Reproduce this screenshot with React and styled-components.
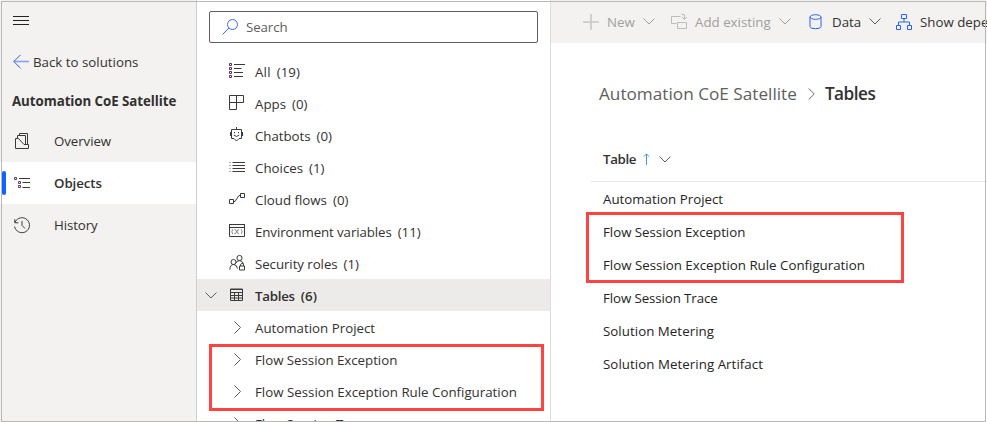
import React from "react";
import styled, { createGlobalStyle } from "styled-components";

const GlobalStyle = createGlobalStyle`
  * { box-sizing: border-box; }
  html, body { margin: 0; padding: 0; }
  body {
    font-family: "Open Sans", "Noto Sans", sans-serif;
    font-size: 13.3px;
    color: #323130;
    background: #fff;
    overflow: hidden;
  }
`;

const Window = styled.div`
  position: relative;
  display: flex;
  width: 987px;
  height: 422px;
  overflow: hidden;
  background: #fff;
`;

const Frame = styled.div`
  position: absolute;
  inset: 1px 1px 0 1px;
  border: 1px solid #b9b8b7;
  pointer-events: none;
`;

const Highlight = styled.div`
  position: absolute;
  left: ${(p) => p.$x}px;
  top: ${(p) => p.$y}px;
  width: ${(p) => p.$w}px;
  height: ${(p) => p.$h}px;
  border: 3px solid #ff4343;
  pointer-events: none;
`;

const Label = styled.span`
  white-space: pre;
  line-height: 20px;
  letter-spacing: ${(p) => p.$track || 0}px;
  font-weight: ${(p) => (p.$strong ? 600 : 400)};
`;

const Icon = styled.svg`
  display: block;
  flex: none;
  width: ${(p) => p.$w || 16}px;
  height: ${(p) => p.$h || 16}px;
  fill: none;
  stroke: ${(p) => p.$color || "#3b3a39"};
  stroke-width: 1;
  overflow: visible;
`;

/* ---------- side navigation ---------- */

const SideNav = styled.nav`
  flex: none;
  width: 197px;
  background: #f3f2f1;
  border-right: 1px solid #d0cfce;
`;

const MenuButton = styled.div`
  height: 40px;
  padding: 12px 0 0 13px;
`;

const BackLink = styled.div`
  display: flex;
  align-items: center;
  gap: 4px;
  height: 44px;
  padding-left: 13px;
`;

const SolutionName = styled.div`
  display: flex;
  align-items: center;
  height: 36px;
  padding: 0 0 2px 12px;
`;

const SolutionLabel = styled(Label)`
  font-weight: 700;
`;

const NavItem = styled.div`
  display: flex;
  align-items: center;
  gap: 10px;
  height: 42px;
  padding-left: 2px;
  background: ${(p) => (p.$active ? "#fff" : "transparent")};
`;

const NavMarker = styled.span`
  width: 4px;
  height: 24px;
  margin-right: -2px;
  border-radius: 2px;
  background: ${(p) => (p.$active ? "#0d64ff" : "transparent")};
`;

const NavText = styled(Label)`
  margin-left: 14px;
`;

/* ---------- object tree ---------- */

const Tree = styled.section`
  flex: none;
  width: 354px;
  overflow: hidden;
  border-right: 1px solid #dddcdb;
`;

const SearchBox = styled.div`
  display: flex;
  align-items: center;
  gap: 8px;
  width: 329px;
  height: 32px;
  margin: 11px 0 12px 12px;
  padding-left: 12px;
  border: 1px solid #605e5c;
  border-radius: 2px;
  color: #605e5c;
`;

const TreeRow = styled.div`
  display: grid;
  grid-template-columns: 32px 16px 1fr;
  align-items: center;
  height: 32px;
  background: ${(p) => (p.$active ? "#edebe9" : "transparent")};
`;

const ChevronSlot = styled.span`
  padding-left: ${(p) => (p.$nested ? 5 : 8)}px;
`;

const TreeText = styled.span`
  display: flex;
  gap: 6px;
  margin-left: 10px;
  padding-top: 2px;
`;

/* ---------- content ---------- */

const Content = styled.main`
  flex: 1;
  min-width: 0;
  overflow: hidden;
`;

const CommandBar = styled.div`
  display: flex;
  height: 43px;
  padding-left: 32px;
  background: #f3f2f1;
`;

const Command = styled.div`
  display: flex;
  flex: none;
  align-items: center;
  width: ${(p) => p.$w}px;
  color: ${(p) => (p.$disabled ? "#a19f9d" : "#323130")};
`;

const CommandText = styled(Label)`
  margin: 0 8px;
`;

const Breadcrumb = styled.div`
  display: flex;
  align-items: center;
  height: 101px;
  padding-left: 48px;
  font-size: 17.2px;
  color: #605e5c;
`;

const Current = styled(Label)`
  color: #323130;
`;

const CrumbSeparator = styled.span`
  margin: 0 10px 0 11px;
`;

const TableHeader = styled.div`
  display: flex;
  align-items: center;
  height: 38px;
  margin-left: 40px;
  padding: 0 0 7px 12px;
  border-bottom: 1px solid #e8e7e6;
`;

const SortMark = styled.span`
  margin: 0 9px 0 7px;
`;

const TableRow = styled.div`
  display: flex;
  align-items: center;
  height: 33px;
  padding: 1px 0 0 52px;
  color: #242424;
`;

/* ---------- icons ---------- */

const ChevronDown = ({ color }) => (
  <Icon $w={12} $h={7} $color={color || "#605e5c"} viewBox="0 0 12 7">
    <path d="M.5.5 6 6 11.5.5" />
  </Icon>
);

const ChevronRight = ({ w = 7, h = 13 }) => (
  <Icon $w={w} $h={h} $color="#605e5c" viewBox="0 0 7 13">
    <path d="M.5.5 6.5 6.5.5 12.5" />
  </Icon>
);

const icons = {
  menu: <path d="M0 4.5h16M0 8.5h16M0 12.5h16" stroke="#222" />,
  back: (
    <>
      <path d="M.8 7.5h15.2" stroke="#8a9ff0" strokeWidth="1.6" />
      <path d="M7.5.8.8 7.5l6.7 6.7" />
    </>
  ),
  overview: (
    <>
      <path d="M1.5 5.5h3l5.5 6h4.5v4h-13z" />
      <path d="M3.5 5.5v-3h8v9M5.5 2.5v-2h8v11" />
    </>
  ),
  objects: (
    <>
      <path d="M.5 2.5h2v2h-2zM4.5 6.5h2v2h-2zM4.5 10.5h2v2h-2z" stroke="#6b3a6b" />
      <path d="M5 3.5h11M8.5 7.5H16M8.5 12.5H16" />
    </>
  ),
  history: <path d="M1.2 5A7.5 7.5 0 1 1 .6 9.5M.8 2.2v3.6h3.6M8 4v4.5l3 3" />,
  all: (
    <>
      <path d="M.5.5h2v2h-2zM.5 4.5h2v2h-2zM.5 8.5h2v2h-2zM.5 12.5h2v2h-2z" stroke="#57305c" />
      <path d="M5 1.5h11M5 5.5h7.5M5 9.5h9M5 13.5h9" />
    </>
  ),
  apps: <path d="M.5.5h7v14h-7zM.5.5h14v7H.5" />,
  chatbots: (
    <>
      <path d="M7.5 0v2.5M2.5 2.5h10v9H10L7.5 14 5 11.5H2.5zM1.5 5v4M13.5 5v4" />
      <path d="M4.8 8q2.7 3 5.4 0M5.5 5v1.2M9.5 5v1.2" />
    </>
  ),
  choices: (
    <>
      <path d="M3.5 3.5H16M3.5 6.5H16M3.5 9.5H16M3.5 12.5H16" />
      <path d="M.5 3.5h1M.5 6.5h1M.5 9.5h1M.5 12.5h1" stroke="#76507b" />
    </>
  ),
  flows: <path d="M.5 8.5h4v4h-4zM11.5 2.5h4v4h-4zM4.5 10.5H6l4-6h1.5" />,
  variables: (
    <>
      <path d="M.5 1.5h15v12H.5z" />
      <path d="M0 1.5h16M.5 4.5h15" />
      <path
        d="M3.7 6.3q-1.8 2.4 0 4.8M12.3 6.3q1.8 2.4 0 4.8M5.5 6.7h1l2.7 4h1M10 6.7H9l-2.7 4h-1"
        strokeWidth=".8"
        stroke="#66646b"
      />
    </>
  ),
  roles: (
    <>
      <circle cx="4.5" cy="7" r="2.5" />
      <circle cx="10.5" cy="3" r="2.6" />
      <path d="M.8 14.5q.4-5 3.7-5t4 4M7 8Q7.7 5.6 10.5 5.6T14.5 9" />
      <path d="M10.5 11h5v4h-5zM11.5 11V9.5q1.5-2.4 3 0V11" />
    </>
  ),
  tables: <path d="M1.5 2h12v11.5h-12zM1 2.5h13M1.5 5.5h12M1.5 8.5h12M1.5 11h12M5.5 5v8.5M9.5 5v8.5" />,
  search: (
    <>
      <circle cx="10.5" cy="5.5" r="5" />
      <path d="M7 9 .5 15.5" />
    </>
  ),
  plus: <path d="M0 8h16M8 0v16" stroke="#c8c6c4" strokeWidth="1.5" />,
  existing: <path d="M5.5 9.5h-5v-7h9M6.5 8.5h9v6h-9zM10.5 .5h3v4.5M11 3l2.5 2.5L16 3" />,
  data: (
    <>
      <ellipse cx="7.5" cy="3" rx="5.5" ry="2.3" />
      <path d="M2 3v9.7q0 2 5.5 2t5.5-2V3" />
    </>
  ),
  dependencies: (
    <path d="M5.5.5h5v4h-5zM.5 11.5h4v4h-4zM11.5 11.5h4v4h-4zM8 4.5v3.5M2.5 11.5V8h11v3.5" />
  ),
};

const Glyph = ({ name, ...rest }) => (
  <Icon viewBox="0 0 16 16" {...rest}>
    {icons[name]}
  </Icon>
);

/* ---------- data ---------- */

const navItems = [
  { icon: "overview", text: "Overview", track: -0.07 },
  { icon: "objects", text: "Objects", track: -0.08, active: true },
  { icon: "history", text: "History", track: -0.1 },
];

const treeItems = [
  { icon: "all", text: "All", count: 19, track: 0.2 },
  { icon: "apps", text: "Apps", count: 0, track: 0 },
  { icon: "chatbots", text: "Chatbots", count: 0, track: -0.05 },
  { icon: "choices", text: "Choices", count: 1, track: 0 },
  { icon: "flows", text: "Cloud flows", count: 0, track: 0 },
  { icon: "variables", text: "Environment variables", count: 11, track: -0.1 },
  { icon: "roles", text: "Security roles", count: 1, track: -0.07 },
  { icon: "tables", text: "Tables", count: 6, track: -0.25, active: true },
];

const tables = [
  { text: "Automation Project", track: 0 },
  { text: "Flow Session Exception", track: -0.03 },
  { text: "Flow Session Exception Rule Configuration", track: 0 },
  { text: "Flow Session Trace", track: -0.1 },
  { text: "Solution Metering", track: 0.04 },
  { text: "Solution Metering Artifact", track: 0.05 },
];

export default function App() {
  return (
    <>
      <GlobalStyle />
      <Window>
        <SideNav>
          <MenuButton><Glyph name="menu" /></MenuButton>
          <BackLink>
            <Glyph name="back" $color="#2b62f0" />
            <Label>Back to solutions</Label>
          </BackLink>
          <SolutionName>
            <SolutionLabel $track={-0.06}>Automation CoE Satellite</SolutionLabel>
          </SolutionName>
          {navItems.map((n) => (
            <NavItem key={n.text} $active={n.active}>
              <NavMarker $active={n.active} />
              <Glyph name={n.icon} />
              <NavText $strong={n.active} $track={n.track}>{n.text}</NavText>
            </NavItem>
          ))}
        </SideNav>

        <Tree>
          <SearchBox>
            <Glyph name="search" $color="#4169f5" />
            <Label $track={-0.1}>Search</Label>
          </SearchBox>
          {treeItems.map((t) => (
            <TreeRow key={t.text} $active={t.active}>
              <ChevronSlot>{t.active && <ChevronDown />}</ChevronSlot>
              <Glyph name={t.icon} />
              <TreeText>
                <Label $strong={t.active} $track={t.track}>{t.text}</Label>
                <Label $strong={t.active}>({t.count})</Label>
              </TreeText>
            </TreeRow>
          ))}
          {tables.slice(0, 4).map((t) => (
            <TreeRow key={t.text}>
              <span />
              <ChevronSlot $nested><ChevronRight /></ChevronSlot>
              <TreeText><Label $track={t.track}>{t.text}</Label></TreeText>
            </TreeRow>
          ))}
        </Tree>

        <Content>
          <CommandBar>
            <Command $w={88} $disabled>
              <Glyph name="plus" />
              <CommandText>New</CommandText>
              <ChevronDown color="#a19f9d" />
            </Command>
            <Command $w={137} $disabled>
              <Glyph name="existing" $color="#bebcba" />
              <CommandText>Add existing</CommandText>
              <ChevronDown color="#a19f9d" />
            </Command>
            <Command $w={88}>
              <Glyph name="data" $color="#2764f5" />
              <CommandText>Data</CommandText>
              <ChevronDown />
            </Command>
            <Command $w={160}>
              <Glyph name="dependencies" $color="#2764f5" />
              <CommandText>Show dependencies</CommandText>
            </Command>
          </CommandBar>
          <Breadcrumb>
            <Label>Automation CoE Satellite</Label>
            <CrumbSeparator><ChevronRight h={12} /></CrumbSeparator>
            <Current $strong $track={-0.5}>Tables</Current>
          </Breadcrumb>
          <TableHeader>
            <Label $strong $track={-0.35}>Table</Label>
            <SortMark>
              <Icon $w={7} $h={12} $color="#3a96dd" viewBox="0 0 7 12">
                <path d="M3.5 12V1M.8 3.6 3.5.9l2.7 2.7" />
              </Icon>
            </SortMark>
            <ChevronDown />
          </TableHeader>
          {tables.map((t) => (
            <TableRow key={t.text}><Label $track={t.track}>{t.text}</Label></TableRow>
          ))}
        </Content>

        <Highlight $x={209} $y={344} $w={335} $h={67} />
        <Highlight $x={586} $y={212} $w={318} $h={71} />
        <Frame />
      </Window>
    </>
  );
}
